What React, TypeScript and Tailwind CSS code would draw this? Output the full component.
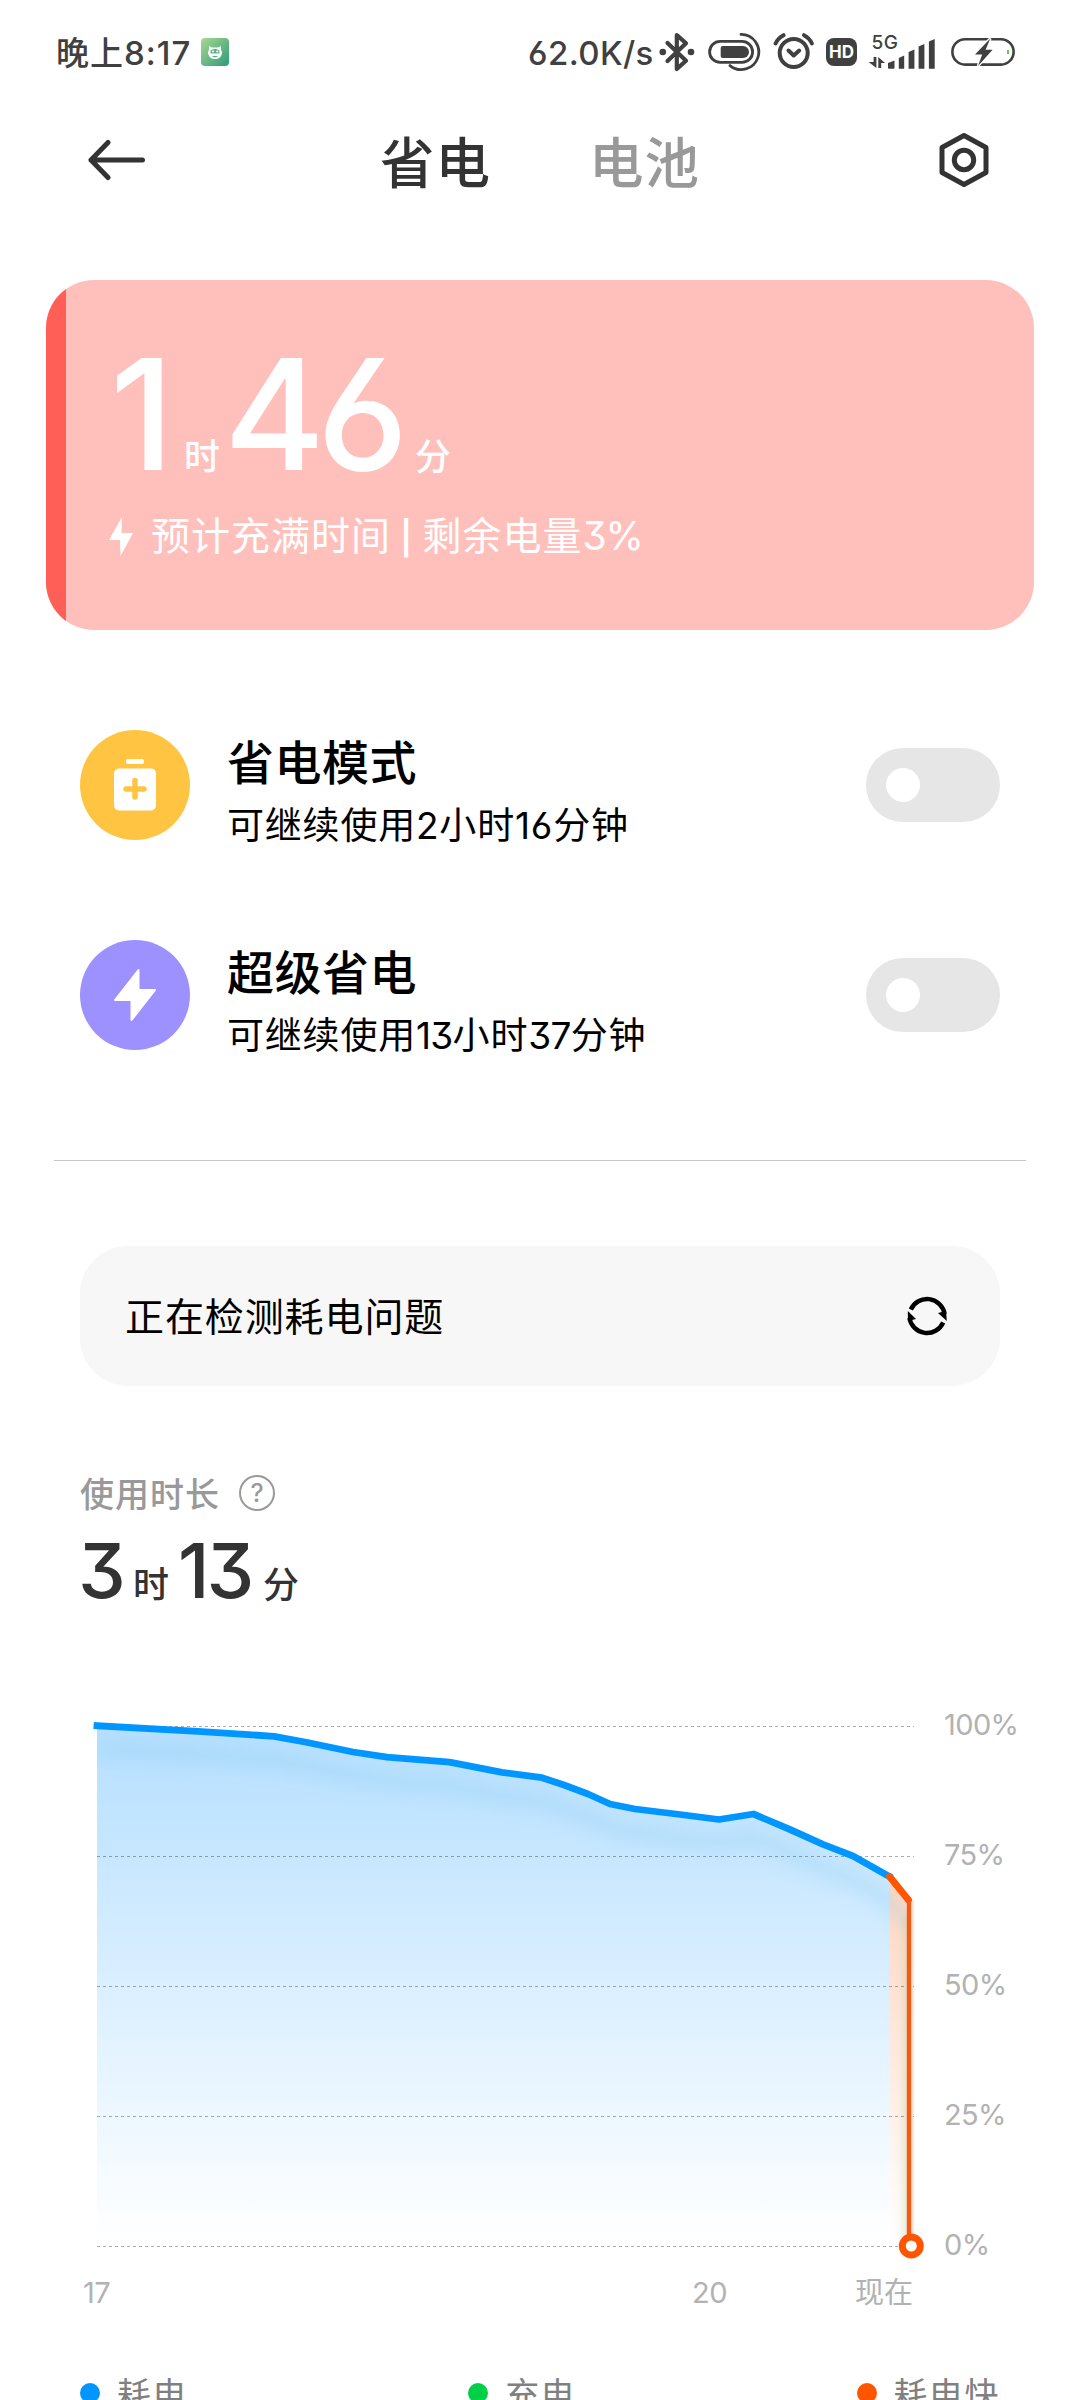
import React from 'react';

type Point = [number, number];

const FONT = "font-[Inter,'Noto_Sans_CJK_SC',sans-serif] [font-feature-settings:'cv09','cv03','cv04']";

const usage: Point[] = [
  [97, 1725.7], [198, 1731.3], [274, 1736.3], [305, 1742], [353, 1752], [387, 1757.2],
  [449.5, 1762.2], [502, 1772.3], [542, 1777.7], [564, 1785], [588, 1794], [610, 1804],
  [635, 1809], [680, 1814.5], [719, 1819.5], [753.5, 1814], [790, 1829.5], [823, 1844.3],
  [853, 1856], [889, 1876.3],
];

const toPath = (points: Point[]) => points.map(([x, y], i) => `${i ? 'L' : 'M'}${x} ${y}`).join(' ');

const levels = ['100%', '75%', '50%', '25%', '0%'];

function BluetoothIcon() {
  return (
    <svg width="36" height="40" viewBox="0 0 36 40" fill="none" stroke="#404040" strokeWidth="4.2" strokeLinejoin="round" strokeLinecap="round">
      <path d="M8.5 11 L27 28.7 L17.8 37 V3 L27 11.3 L8.5 29" />
      <circle cx="3.8" cy="20" r="3.3" fill="#404040" stroke="none" />
      <circle cx="32" cy="20" r="3.3" fill="#404040" stroke="none" />
    </svg>
  );
}

function BandIcon() {
  return (
    <svg width="54" height="40" viewBox="0 0 54 40" fill="none" stroke="#404040" strokeWidth="2.8">
      <rect x="1.6" y="9.4" width="43" height="21" rx="10.5" />
      <path d="M14.7 14 H35 A6 6 0 0 1 35 26 H14.7 A2 2 0 0 1 12.7 24 V16 A2 2 0 0 1 14.7 14 Z" fill="#404040" stroke="none" />
      <path d="M33 2.4 A17.6 17.6 0 1 1 22 33.6" strokeLinecap="round" />
    </svg>
  );
}

function AlarmIcon() {
  return (
    <svg width="42" height="40" viewBox="0 0 42 40" fill="none" stroke="#404040" strokeWidth="4" strokeLinecap="round" strokeLinejoin="round">
      <circle cx="20.7" cy="21" r="14" />
      <path d="M15.5 18.5 L20.7 23.5 L26.2 18.5" />
      <path d="M2.6 11.5 Q5 6 10.5 3.2" />
      <path d="M31 3.2 Q36.5 6 38.9 11.5" />
    </svg>
  );
}

function SignalIcon() {
  return (
    <svg width="68" height="44" viewBox="868 29 68 44" fill="#404040">
      <text x="871.5" y="48" fontSize="19" fontWeight="500" letterSpacing="0.6">5G</text>
      <path d="M873.6 56 H876.4 V67 L868.6 61 H873.6 Z" />
      <path d="M878.3 67 V56 L885 62 H881.2 V67 Z" />
      <path d="M888 62 L894.5 59.5 V67 Q894.5 67.7 893.5 67.7 H889 Q888 67.7 888 67 Z" />
      <path d="M898.8 57 L904.2 54.5 V67.7 H898.8 Z" />
      <path d="M908.6 51 L914.4 48.5 V67.7 H908.6 Z" />
      <path d="M918.6 45.5 L924.4 43 V67.7 H918.6 Z" />
      <path d="M928.9 40.5 L934.7 38 V67.7 H928.9 Z" />
    </svg>
  );
}

function BatteryIcon() {
  return (
    <svg width="66" height="32" viewBox="0 0 66 32">
      <rect x="2.4" y="3.2" width="61.2" height="25.4" rx="12.7" fill="none" stroke="#404040" strokeWidth="2.6" />
      <path d="M40.3 2.5 L25 18.4 H32.2 L28 30 L42.6 13.8 H35.6 Z" fill="#404040" stroke="#fff" strokeWidth="2.6" paintOrder="stroke" />
      <rect x="57" y="14" width="2" height="4" fill="#6cc644" />
    </svg>
  );
}

function StatusBar() {
  return (
    <div className="flex h-[104px] items-center pl-[56px] text-[#404040]">
      <span className="w-[145px] whitespace-nowrap pt-px text-[33px] font-medium leading-[40px]">
        <span className="tracking-[1px]">晚上</span>
        <span className="tracking-[1px]">8:17</span>
      </span>
      <svg width="28" height="28" viewBox="0 0 28 28">
        <defs>
          <linearGradient id="app" x1="0" y1="0" x2="1" y2="1">
            <stop offset="0" stopColor="#a8d890" />
            <stop offset="1" stopColor="#2f9a78" />
          </linearGradient>
        </defs>
        <rect width="28" height="28" rx="4" fill="url(#app)" />
        <path d="M8 8 L11 9.5 H17 L20 8 V12 Q21 13 21 15 Q20 21 14 21 Q8 21 7 15 Q7 13 8 12 Z" fill="#fff" />
        <path d="M9.5 12.5 Q14 9 18.5 12.5 V15.5 H9.5 Z" fill="#5fb585" />
        <path d="M11 18 H17 Q14 20.5 11 18 Z" fill="#4caa80" />
        <rect x="11" y="12.5" width="1.8" height="1.8" fill="#fff" />
        <rect x="15.4" y="12.5" width="1.8" height="1.8" fill="#fff" />
      </svg>
      <span className="ml-[299px] w-[131px] whitespace-nowrap pt-px text-[33px] font-medium leading-[40px] tracking-[0.4px]">62.0K/s</span>
      <BluetoothIcon />
      <div className="ml-[13px]"><BandIcon /></div>
      <div className="ml-[11px]"><AlarmIcon /></div>
      <div className="ml-[11px] flex h-[28px] w-[31px] items-center justify-center rounded-[8px] bg-[#404040] text-[17px] font-bold leading-none text-white">HD</div>
      <div className="ml-[11px]"><SignalIcon /></div>
      <div className="ml-[14px]"><BatteryIcon /></div>
    </div>
  );
}

function Header() {
  return (
    <div className="flex h-[112px] items-center pl-[88px] text-[54.5px] font-medium leading-[60px] tracking-[1px]">
      <svg width="58" height="42" viewBox="0 0 58 42" fill="none" stroke="#333" strokeWidth="5" strokeLinecap="round" strokeLinejoin="round">
        <path d="M54.5 21 H3 M20 3.5 L3 21 L20 38.5" />
      </svg>
      <span className="ml-[234px] w-[209px] pt-[6px] text-[#333]">省电</span>
      <span className="w-[350px] pt-[6px] text-[#999]">电池</span>
      <svg width="50" height="56" viewBox="0 0 50 56" fill="none" stroke="#333" strokeWidth="5" strokeLinejoin="round">
        <path d="M25 3.5 L47 15.5 V40.5 L25 52.5 L3 40.5 V15.5 Z" />
        <circle cx="25" cy="28" r="9.7" />
      </svg>
    </div>
  );
}

function ChargeCard() {
  return (
    <div className="mx-[46px] mt-[64px] flex h-[350px] overflow-hidden rounded-[48px] bg-[#ffc0bc] text-white">
      <div className="w-[20px] bg-[#ff5f57]" />
      <div className="pl-[42px] pt-[74px]">
        <div className="flex h-[120px] items-baseline text-[36px] font-medium leading-[120px]">
          <span className="w-[76px] pl-[2px] text-[154px] font-[450]">1</span>
          <span className="w-[40px]">时</span>
          <span className="w-[191px] text-[154px] font-[450] tracking-[-8px]">46</span>
          <span>分</span>
        </div>
        <div className="mt-[38px] flex items-center text-[39px] leading-[48px]">
          <svg width="26" height="40" viewBox="0 0 26 40" fill="#fff">
            <path d="M14 0 L1 23 H12 L12.5 39 L25 16 H13.5 Z" />
          </svg>
          <span className="ml-[17px] whitespace-nowrap tracking-[1px]">
            预计充满时间<span className="text-[33px] font-semibold"> | </span>剩余电量<span className="tracking-[-1.2px]">3%</span>
          </span>
        </div>
      </div>
    </div>
  );
}

function Toggle() {
  return (
    <button className="flex h-[74px] w-[134px] items-center rounded-full bg-[#e6e6e6] pl-[20px]">
      <span className="h-[34px] w-[34px] rounded-full bg-white" />
    </button>
  );
}

function ModeRow({ icon, color, title, desc }: { icon: React.ReactNode; color: string; title: string; desc: React.ReactNode }) {
  return (
    <div className="flex h-[110px] items-center px-[80px] text-black">
      <div className={`flex h-[110px] w-[110px] items-center justify-center rounded-full ${color}`}>{icon}</div>
      <div className="ml-[37px] flex-1 whitespace-nowrap pt-[18px]">
        <div className="text-[47px] font-medium leading-[60px] tracking-[0.5px]">{title}</div>
        <div className="mt-[3px] text-[37px] leading-[60px] tracking-[0.8px]">{desc}</div>
      </div>
      <Toggle />
    </div>
  );
}

function UsageChart() {
  const line = toPath(usage);
  return (
    <svg width="930" height="570" viewBox="0 1700 930 570" fill="none">
      <defs>
        <linearGradient id="blue" gradientUnits="userSpaceOnUse" x1="0" y1="1726" x2="0" y2="2240">
          <stop offset="0" stopColor="#b5dfff" />
          <stop offset="1" stopColor="#ffffff" />
        </linearGradient>
        <linearGradient id="orange" gradientUnits="userSpaceOnUse" x1="0" y1="1876" x2="0" y2="2240">
          <stop offset="0" stopColor="#ffd6c2" />
          <stop offset="1" stopColor="#ffffff" />
        </linearGradient>
        <filter id="soft" x="-10%" y="-50%" width="120%" height="200%">
          <feGaussianBlur stdDeviation="8" />
        </filter>
        <filter id="softLine" filterUnits="userSpaceOnUse" x="870" y="1850" width="60" height="420">
          <feGaussianBlur stdDeviation="5" />
        </filter>
        <clipPath id="area">
          <path d={`${line} L909 1900 V2246 H97 Z`} />
        </clipPath>
      </defs>
      <path d={`${line} V2246 H97 Z`} fill="url(#blue)" />
      <path d="M889 1876 L909 1900 V2246 H889 Z" fill="url(#orange)" />
      <g clipPath="url(#area)">
        <path d={`${line} L909 1900`} transform="translate(0 24)" stroke="#7cc4e8" strokeOpacity="0.22" strokeWidth="18" filter="url(#soft)" />
        <path d="M909 1915 V2262" stroke="#b9c79a" strokeOpacity="0.45" strokeWidth="10" filter="url(#softLine)" />
      </g>
      <path d="M912 1900 V2240" stroke="#fde3d6" strokeWidth="4" />
      {levels.map((level, i) => (
        <path key={level} d={`M97 ${1726.5 + i * 130} H914`} stroke="#000" strokeOpacity="0.32" strokeDasharray="3 3" />
      ))}
      <path d={line} stroke="#0096ff" strokeWidth="6.8" strokeLinejoin="round" strokeLinecap="square" />
      <path d="M889.5 1876.5 L908.5 1900" stroke="#ff5500" strokeWidth="6.8" strokeLinecap="round" />
      <path d="M909 1899 V2240" stroke="#f45a12" strokeWidth="4.4" />
      <circle cx="911.3" cy="2246" r="9" fill="#fff" stroke="#ff5500" strokeWidth="7" />
    </svg>
  );
}

function Legend({ color, label }: { color: string; label: string }) {
  return (
    <div className="flex items-center">
      <span className={`h-[20px] w-[20px] rounded-full ${color}`} />
      <span className="ml-[17px] whitespace-nowrap pt-[4px] text-[34px] leading-[36px] tracking-[1.5px]">{label}</span>
    </div>
  );
}

export default function App() {
  return (
    <div className={`h-[2400px] w-[1080px] overflow-hidden bg-white ${FONT}`}>
      <StatusBar />
      <Header />
      <ChargeCard />

      <div className="mt-[100px] flex flex-col gap-[100px]">
        <ModeRow
          color="bg-[#ffc542]"
          title="省电模式"
          desc="可继续使用2小时16分钟"
          icon={
            <svg width="42" height="52" viewBox="0 0 42 52" fill="#fff">
              <rect x="12" y="0" width="18" height="5" rx="2" />
              <rect x="0" y="9.5" width="42" height="42" rx="5" />
              <path d="M21 21.5 V38 M12 30 H30" stroke="#ffc542" strokeWidth="5.5" strokeLinecap="round" />
            </svg>
          }
        />
        <ModeRow
          color="bg-[#9d91ff]"
          title="超级省电"
          desc={
            <>
              可继续使用<span className="tracking-[-0.7px]">13</span>小时<span className="tracking-[-0.7px]">37</span>分钟
            </>
          }
          icon={
            <svg width="44" height="54" viewBox="0 0 44 54" fill="#fff" stroke="#fff" strokeWidth="2" strokeLinejoin="round">
              <path d="M25.5 2 V22 H42 L18.5 52 V32 H2 Z" />
            </svg>
          }
        />
      </div>

      <div className="mx-[54px] mt-[110px] h-px bg-[#c8c8c8]" />

      <div className="mx-[80px] mt-[85px] flex h-[140px] items-center justify-between rounded-[48px] bg-[#f7f7f7] pl-[45px] pr-[53px]">
        <span className="pt-[2px] text-[39px] leading-[48px] tracking-[0.9px] text-black">正在检测耗电问题</span>
        <svg width="40" height="40" viewBox="0 0 40 40" fill="none" stroke="#000" strokeWidth="4.4">
          <path d="M3.8 13.5 A17.8 17.8 0 0 1 37.6 18" />
          <path d="M36.2 26.5 A17.8 17.8 0 0 1 2.4 22" />
          <path d="M39.8 25 L31 17 L39 15 Z" fill="#000" stroke="none" />
          <path d="M0.8 15 L9 23 L1 25 Z" fill="#000" stroke="none" />
        </svg>
      </div>

      <div className="mt-[87px] flex h-[40px] items-center pl-[80px] text-[#999]">
        <span className="pt-[3px] text-[34px] font-medium leading-[40px] tracking-[1px]">使用时长</span>
        <span className="ml-[19px] flex h-[36px] w-[36px] items-center justify-center rounded-full border-[2.5px] border-[#999] text-[25px] font-medium leading-none">?</span>
      </div>
      <div className="mt-[22px] flex h-[70px] items-baseline pl-[78px] text-[36px] font-medium leading-[70px] text-[#333]">
        <span className="w-[55px] text-[76px] font-[450]">3</span>
        <span className="w-[45px]">时</span>
        <span className="w-[85px] text-[76px] font-[450] tracking-[-3px]">13</span>
        <span>分</span>
      </div>

      <div className="mt-[95px] flex h-[570px] text-[29px] leading-[30px] text-[#b2b2b2]">
        <UsageChart />
        <div className="ml-[14px] flex h-[560px] flex-col justify-between pt-[10px]">
          {levels.map((level) => (
            <span key={level} className="tracking-[-0.6px]">{level}</span>
          ))}
        </div>
      </div>

      <div className="mt-[8px] flex pl-[83px] text-[29px] leading-[30px] text-[#b2b2b2]">
        <span className="w-[609px] tracking-[-0.5px]">17</span>
        <span className="w-[163px] tracking-[-0.5px]">20</span>
        <span>现在</span>
      </div>

      <div className="mt-[65px] flex justify-between pl-[80px] pr-[80px] text-[#808080]">
        <Legend color="bg-[#0096ff]" label="耗电" />
        <Legend color="bg-[#00d048]" label="充电" />
        <Legend color="bg-[#ff5500]" label="耗电快" />
      </div>
    </div>
  );
}
